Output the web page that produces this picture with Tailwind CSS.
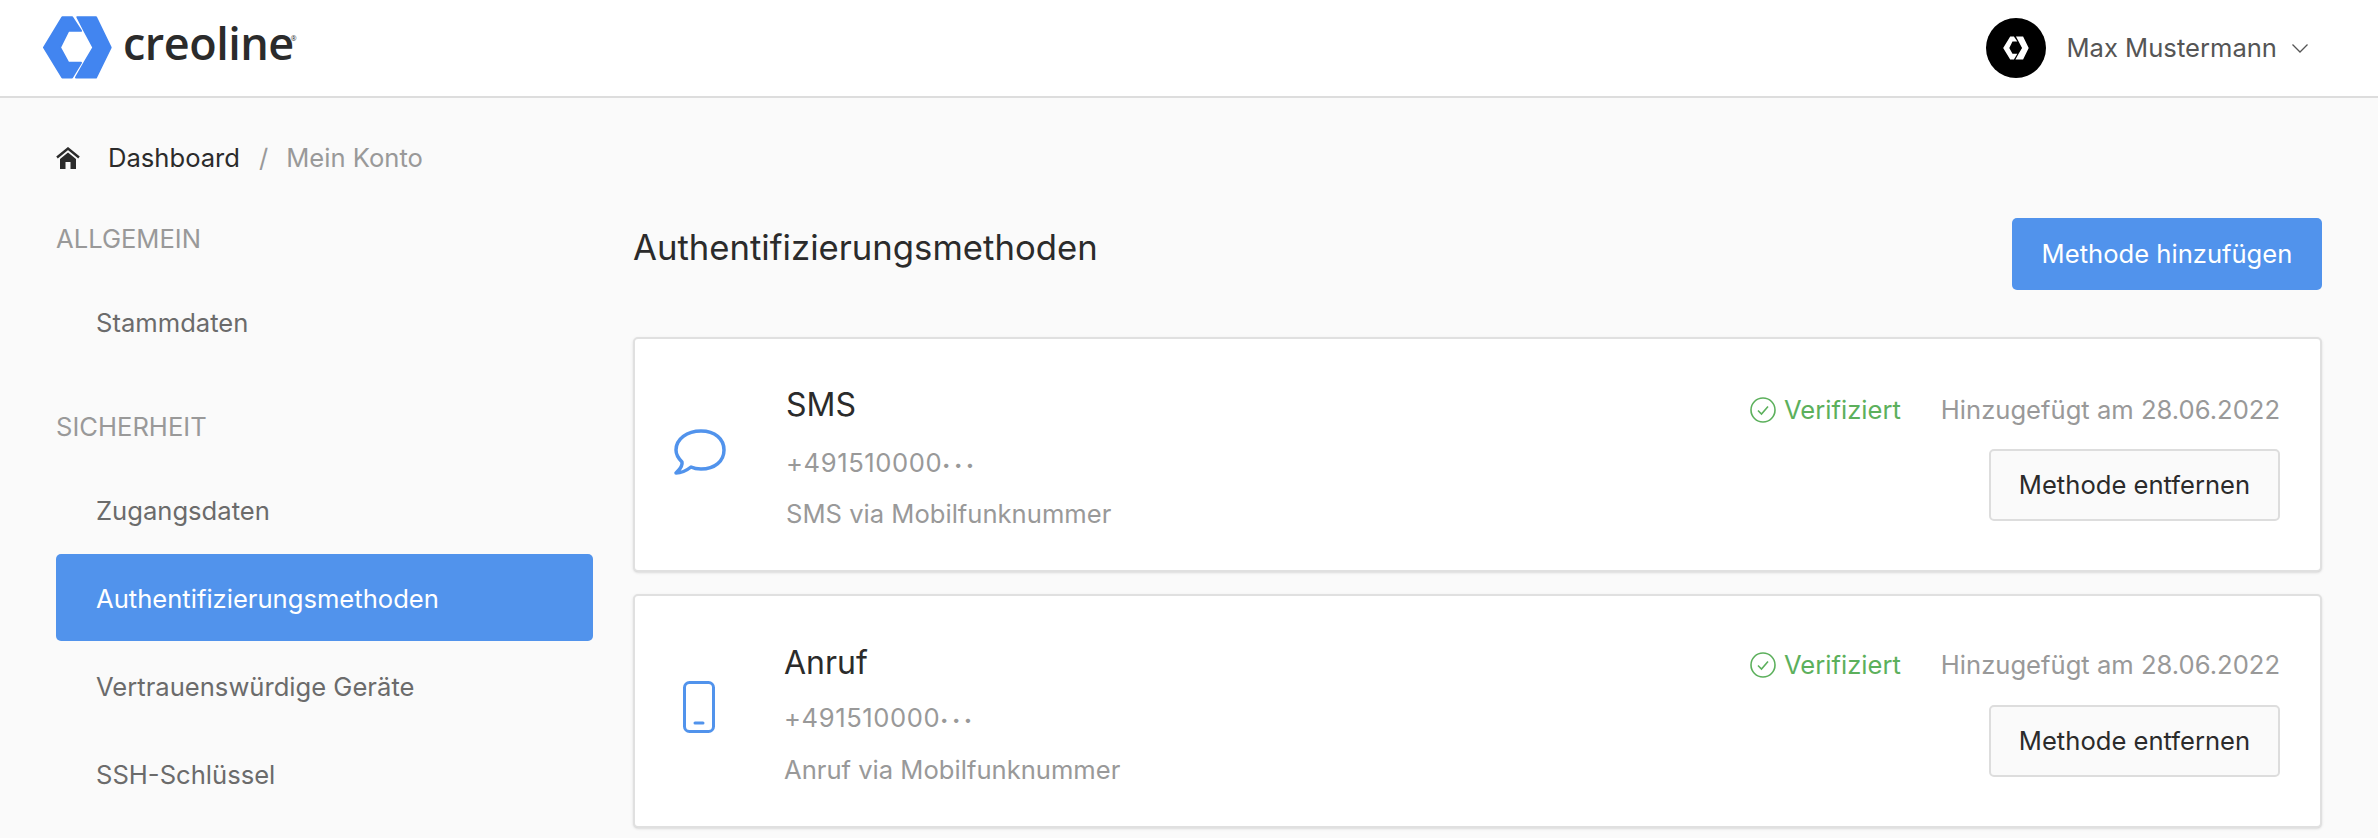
<!DOCTYPE html>
<html lang="de">
<head>
  <meta charset="UTF-8" />
  <title>Authentifizierungsmethoden - creoline</title>
  <script src="https://cdn.jsdelivr.net/npm/@tailwindcss/browser@4"></script>
</head>
<body class="bg-[#fafafa] font-['Inter',sans-serif] text-[25.6px] text-[#2b2b2b] h-[838px] overflow-hidden">

  <header class="h-[98px] bg-white border-b-2 border-[#dddddd] flex items-center justify-between pl-[43px] pr-[70px]">
    <div class="flex items-center gap-[11px]">
      <svg class="w-[69px] h-[63px] -mt-[1px]" viewBox="129 48 207 188" fill="#4285f0" stroke="#4285f0" stroke-width="6" stroke-linejoin="round">
        <path d="M187 51H216L243 92H205L180 142L205 188H243L216 232H187L132 142Z"/>
        <path d="M232 51H288L332 142L288 232H228L253 188L280 142L253 92Z"/>
      </svg>
      <span class="font-['Open_Sans',sans-serif] font-semibold text-[45px] leading-none tracking-[-0.5px] text-[#2b2b2b] -mt-[11px]">creoline<sup class="-ml-[3px] text-[7px] font-normal align-super">®</sup></span>
    </div>
    <div class="flex items-center">
      <div class="w-[60px] h-[60px] rounded-full bg-black flex items-center justify-center">
        <svg class="w-[28px] h-[24px]" viewBox="129 48 207 188" fill="#fff">
          <path d="M187 51H216L243 92H205L180 142L205 188H243L216 232H187L132 142Z"/>
          <path d="M232 51H288L332 142L288 232H228L253 188L280 142L253 92Z"/>
        </svg>
      </div>
      <span class="ml-[20px] text-[#555555]">Max Mustermann</span>
      <svg class="ml-[15px] w-[16px] h-[9px]" viewBox="0 0 16 9" fill="none" stroke="#555555" stroke-width="1.3"><path d="M0.5 0.5L8 8L15.5 0.5"/></svg>
    </div>
  </header>

  <div class="px-[56px]">
    <nav class="h-[40px] mt-[40px] flex items-center">
      <svg class="w-[24px] h-[22px]" viewBox="0 0 24 22" fill="#2b2b2b">
        <path d="M1 10.5L12 1.5L23 10.5" fill="none" stroke="#2b2b2b" stroke-width="2.4"/>
        <path d="M4 12L12 5.5L20 12V22H14.5V15H9.5V22H4Z"/>
      </svg>
      <a class="ml-[28px] pt-[1px]">Dashboard</a>
      <span class="ml-[19px] pt-[1px] text-[#999999]">/</span>
      <span class="ml-[18px] pt-[1px] text-[#999999]">Mein Konto</span>
    </nav>

    <div class="flex mt-[40px]">
      <aside class="w-[537px] shrink-0">
        <div class="h-[42px] pt-[1px] flex items-center text-[#999999]">ALLGEMEIN</div>
        <a class="mt-[19px] h-[88px] flex items-center pl-[40px] text-[#6b6b6b]">Stammdaten</a>
        <div class="mt-[39px] h-[42px] pt-[1px] flex items-center text-[#999999]">SICHERHEIT</div>
        <a class="mt-[19px] h-[87px] pt-[2px] flex items-center pl-[40px] text-[#6b6b6b]">Zugangsdaten</a>
        <a class="h-[87px] pt-[4px] flex items-center pl-[40px] rounded-[5px] bg-[#5193ec] text-white">Authentifizierungsmethoden</a>
        <a class="mt-[1px] h-[88px] pt-[2px] flex items-center pl-[40px] text-[#6b6b6b]">Vertrauenswürdige Geräte</a>
        <a class="h-[88px] pt-[2px] flex items-center pl-[40px] text-[#6b6b6b]">SSH-Schlüssel</a>
      </aside>

      <main class="ml-[40px] flex-1">
        <div class="h-[72px] flex items-center justify-between">
          <h2 class="text-[34.7px] font-normal -mt-[14px]">Authentifizierungsmethoden</h2>
          <button class="h-[72px] w-[310px] rounded-[5px] bg-[#5193ec] text-white">Methode hinzufügen</button>
        </div>

        <div class="mt-[47px] h-[235px] bg-white border-2 border-[#e0e0e0] rounded-[5px] shadow-sm flex">
          <div class="w-[130px] flex items-center justify-center shrink-0">
            <svg class="w-[52px] h-[46px] -mt-[6px]" viewBox="0 0 52 46" fill="none" stroke="#5193ec" stroke-width="3.5" stroke-linejoin="round">
              <path d="M8 33C4 29 2 25 2 21C2 10 13 2 27 2C41 2 50 10 50 21C50 32 41 40 27 40C23 40 20 39.5 17 38C12 42 7 44 2 44C5 41 9 38 8 33Z"/>
            </svg>
          </div>
          <div class="ml-[21px] pt-[46px]">
            <h3 class="h-[40px] leading-[40px] text-[32px] font-normal">SMS</h3>
            <p class="mt-[20px] leading-[36px] text-[#999999] tracking-[0.6px]">+491510000<span class="text-[14px] tracking-[4px] align-[2px]">•••</span></p>
            <p class="mt-[13px] leading-[36px] text-[#999999]">SMS via Mobilfunknummer</p>
          </div>
          <div class="ml-auto pr-[40px] pt-[52px] flex flex-col items-end">
            <div class="h-[38px] flex items-center">
              <svg class="w-[26px] h-[26px]" viewBox="0 0 26 26" fill="none" stroke="#5cb05c" stroke-width="1.6"><circle cx="13" cy="13" r="12"/><path d="M8 13.5L11.5 17L18 9.5"/></svg>
              <span class="ml-[8px] text-[#5cb05c]">Verifiziert</span>
              <span class="ml-[40px] text-[#999999]">Hinzugefügt am 28.06.2022</span>
            </div>
            <button class="mt-[20px] h-[72px] w-[291px] rounded-[5px] border-2 border-[#dddddd] bg-[#fafafa]">Methode entfernen</button>
          </div>
        </div>

        <div class="mt-[22px] h-[234px] bg-white border-2 border-[#e0e0e0] rounded-[5px] shadow-sm flex">
          <div class="w-[128px] flex items-center justify-center shrink-0">
            <svg class="w-[32px] h-[52px] -mt-[8px]" viewBox="0 0 32 52" fill="none" stroke="#5193ec" stroke-width="3" stroke-linecap="round">
              <rect x="1.5" y="1.5" width="29" height="49" rx="5"/>
              <path d="M12 42H20"/>
            </svg>
          </div>
          <div class="ml-[21px] pt-[47px]">
            <h3 class="h-[40px] leading-[40px] text-[32px] font-normal">Anruf</h3>
            <p class="mt-[17px] leading-[36px] text-[#999999] tracking-[0.6px]">+491510000<span class="text-[14px] tracking-[4px] align-[2px]">•••</span></p>
            <p class="mt-[14px] leading-[36px] text-[#999999]">Anruf via Mobilfunknummer</p>
          </div>
          <div class="ml-auto pr-[40px] pt-[50px] flex flex-col items-end">
            <div class="h-[38px] flex items-center">
              <svg class="w-[26px] h-[26px]" viewBox="0 0 26 26" fill="none" stroke="#5cb05c" stroke-width="1.6"><circle cx="13" cy="13" r="12"/><path d="M8 13.5L11.5 17L18 9.5"/></svg>
              <span class="ml-[8px] text-[#5cb05c]">Verifiziert</span>
              <span class="ml-[40px] text-[#999999]">Hinzugefügt am 28.06.2022</span>
            </div>
            <button class="mt-[21px] h-[72px] w-[291px] rounded-[5px] border-2 border-[#dddddd] bg-[#fafafa]">Methode entfernen</button>
          </div>
        </div>
      </main>
    </div>
  </div>
</body>
</html>
